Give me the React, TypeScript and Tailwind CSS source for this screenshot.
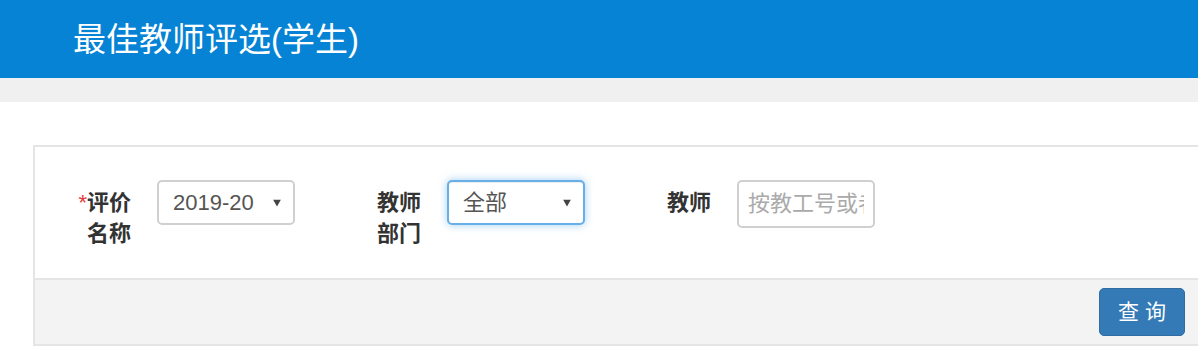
import { ChangeEvent, useState } from "react";

const font = { fontFamily: '"Liberation Sans", "Noto Sans CJK SC", sans-serif' };

function Caret() {
  return (
    <svg
      className="pointer-events-none absolute right-[14px] top-1/2 -translate-y-1/2"
      width="8"
      height="7"
      viewBox="0 0 8 7"
    >
      <path d="M0 0 L8 0 L4 7 Z" fill="#444" />
    </svg>
  );
}

interface FieldProps {
  label: string;
  required?: boolean;
  children: React.ReactNode;
}

function Field({ label, required, children }: FieldProps) {
  return (
    <div className="flex w-[290px] items-start">
      <label className="ml-[36px] w-[60px] pt-[7px] text-right text-[22px] font-bold leading-[31px] text-[#333]">
        {required && <span className="text-[#e4393c] font-normal">*</span>}
        {label}
      </label>
      <div className="ml-[26px] w-[138px]">{children}</div>
    </div>
  );
}

export default function App() {
  const [term, setTerm] = useState("2019-20");
  const [dept, setDept] = useState("全部");
  const [teacher, setTeacher] = useState("");

  return (
    <div className="min-h-screen w-full overflow-hidden bg-white" style={font}>
      {/* Header */}
      <div className="flex h-[78px] items-center bg-[#0683d4] pl-[73px]">
        <h1 className="pt-[2px] text-[33px] font-normal text-white">最佳教师评选(学生)</h1>
      </div>
      <div className="h-[24px] bg-[#f0f0f0]" />

      {/* Search panel */}
      <div className="pl-[33px] pt-[43px]">
        <div className="w-[1167px] border-2 border-[#e5e5e5]">
          <div className="flex h-[131px] pt-[33px]">
            <Field label="评价名称" required>
              <div className="relative">
                <select
                  value={term}
                  onChange={(e: ChangeEvent<HTMLSelectElement>) => setTerm(e.target.value)}
                  className="h-[45px] w-full appearance-none rounded-[5px] border-2 border-[#d0d0d0] bg-white pl-[14px] text-[22px] text-[#555] outline-none"
                >
                  <option>2019-20</option>
                </select>
                <Caret />
              </div>
            </Field>
            <Field label="教师部门">
              <div className="relative">
                <select
                  value={dept}
                  onChange={(e: ChangeEvent<HTMLSelectElement>) => setDept(e.target.value)}
                  className="h-[45px] w-full appearance-none rounded-[5px] border-2 border-[#66afe9] bg-white pl-[14px] text-[22px] text-[#555] outline-none shadow-[inset_0_1px_1px_rgba(0,0,0,0.075),0_0_8px_rgba(102,175,233,0.6)]"
                >
                  <option>全部</option>
                </select>
                <Caret />
              </div>
            </Field>
            <Field label="教师">
              <input
                value={teacher}
                onChange={(e: ChangeEvent<HTMLInputElement>) => setTeacher(e.target.value)}
                placeholder="按教工号或者姓名"
                className="h-[48px] w-full rounded-[5px] border-2 border-[#d0d0d0] bg-white px-[9px] text-[22px] text-[#555] outline-none placeholder:text-[#aaa]"
              />
            </Field>
          </div>
          <div className="flex h-[66px] items-center justify-end border-t-2 border-[#e5e5e5] bg-[#f3f3f3] pr-[13px]">
            <button className="h-[48px] w-[86px] rounded-[5px] border border-[#2e6da4] bg-[#337ab7] text-[21px] text-white">
              查 询
            </button>
          </div>
        </div>
      </div>
    </div>
  );
}
